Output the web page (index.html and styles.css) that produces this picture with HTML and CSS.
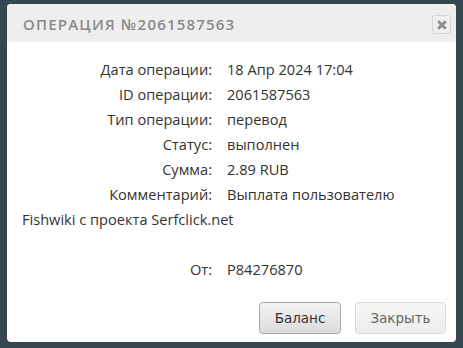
FILE: index.html
```html
<!DOCTYPE html>
<html lang="ru">
<head>
<meta charset="utf-8">
<link rel="stylesheet" href="styles.css">
</head>
<body>
<div class="dialog">
  <div class="header">
    <div class="title">ОПЕРАЦИЯ №2061587563</div>
    <button class="close" aria-label="Закрыть">
      <svg width="10" height="10" viewBox="0 0 10 10"><path d="M1.2 1.2 L8.8 8.8 M8.8 1.2 L1.2 8.8" stroke="#8f8f8f" stroke-width="3"/></svg>
    </button>
  </div>
  <div class="body">
    <div class="row"><span class="label">Дата операции:</span>18 Апр 2024 17:04</div>
    <div class="row"><span class="label">ID операции:</span>2061587563</div>
    <div class="row"><span class="label">Тип операции:</span>перевод</div>
    <div class="row"><span class="label">Статус:</span>выполнен</div>
    <div class="row"><span class="label">Сумма:</span>2.89 RUB</div>
    <div class="row"><span class="label">Комментарий:</span>Выплата пользователю Fishwiki с проекта Serfclick.net</div>
    <div class="row empty"></div>
    <div class="row"><span class="label">От:</span>P84276870</div>
  </div>
  <div class="footer">
    <button class="btn primary">Баланс</button>
    <button class="btn secondary">Закрыть</button>
  </div>
</div>
</body>
</html>
```
FILE: styles.css
```css
html, body {
  margin: 0;
  padding: 0;
}
body {
  background: #36464f;
  width: 463px;
  height: 348px;
  overflow: hidden;
  padding: 4px 0 0 7px;
  box-sizing: border-box;
}
.dialog {
  width: 449px;
  height: 338px;
  background: #fff;
  border-radius: 4px;
  overflow: hidden;
  display: flex;
  flex-direction: column;
}
.header {
  height: 38px;
  background: #eeeeee;
  display: flex;
  align-items: center;
  justify-content: space-between;
  padding: 0 5px 0 16px;
  flex: none;
}
.title {
  font-family: "Open Sans", sans-serif;
  font-weight: 600;
  font-size: 15px;
  letter-spacing: 1.2px;
  color: #8a8a8a;
  margin-top: 1px;
}
.close {
  width: 19px;
  height: 19px;
  margin-top: 3px;
  border: 1px solid #d6d6d6;
  border-radius: 3px;
  background: #efefef;
  padding: 0;
  display: flex;
  align-items: center;
  justify-content: center;
}
.body {
  padding: 15px 15px 0 15px;
  font-family: "Open Sans", sans-serif;
  font-size: 14.6px;
  color: #333;
  flex: 1;
}
.row {
  line-height: 25px;
  min-height: 25px;
}
.label {
  display: inline-block;
  width: 190px;
  padding-right: 15px;
  text-align: right;
}
.footer {
  display: flex;
  justify-content: flex-end;
  gap: 14px;
  padding: 0 10px 8px 0;
  flex: none;
}
.btn {
  font-family: "DejaVu Sans", sans-serif;
  font-size: 13.5px;
  height: 32px;
  border-radius: 4px;
  padding: 0;
}
.btn.primary {
  width: 82px;
  color: #333;
  border: 1px solid #a8a8a8;
  background: linear-gradient(#f2f2f2, #dcdcdc);
}
.btn.secondary {
  width: 91px;
  color: #666;
  border: 1px solid #d9d9d9;
  background: linear-gradient(#f7f7f7, #ececec);
}
```
